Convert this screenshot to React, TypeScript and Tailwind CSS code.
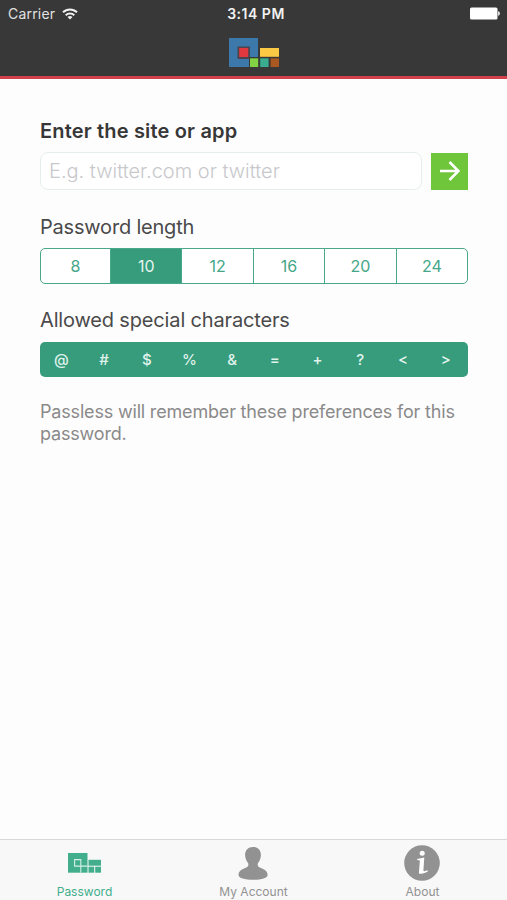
import { useState } from 'react'

const lengths = ['8', '10', '12', '16', '20', '24']
const specials = ['@', '#', '$', '%', '&', '=', '+', '?', '<', '>']

function StatusBar() {
  return (
    <div className="flex h-[27px] items-center justify-between pl-2 pr-[7px] text-[14px] text-[#e2e2e2]">
      <div className="flex w-40 items-center gap-[7px]">
        <span className="tracking-[0.2px]">Carrier</span>
        <svg width="16" height="12" viewBox="0 0 16 12" fill="none" stroke="#f0f0f0" strokeWidth="2">
          <path d="M1 4.3a10 10 0 0 1 14 0" />
          <path d="M3.7 7.2a6.2 6.2 0 0 1 8.6 0" />
          <path d="M8 11.6 5.5 9.1a3.6 3.6 0 0 1 5 0Z" fill="#f0f0f0" stroke="none" />
        </svg>
      </div>
      <span className="relative left-0.5 text-[14px] font-semibold tracking-[0.5px] text-[#f2f2f2]">3:14 PM</span>
      <div className="flex w-40 justify-end">
        <svg width="30" height="13" viewBox="0 0 30 13" fill="#fff">
          <rect x="0" y="0.5" width="27.5" height="12" rx="1.5" />
          <path d="M28.2 4.3c2.2.5 2.2 3.9 0 4.4Z" />
        </svg>
      </div>
    </div>
  )
}

function Logo() {
  return (
    <svg width="50" height="30" viewBox="0 0 50 30">
      <path d="M0 0h29v19.5H20v9.5H0Z" fill="#3d78aa" />
      <rect x="8.5" y="8.5" width="12.5" height="12.5" fill="#4a4550" />
      <rect x="10.2" y="10" width="9" height="9" fill="#e0383e" />
      <path d="M20 19h30v1.3H20Z" fill="#383838" />
      <rect x="31" y="10" width="19" height="8.8" fill="#fbc943" />
      <rect x="21" y="20.3" width="8.2" height="8.7" fill="#82d243" />
      <rect x="31.2" y="20.3" width="8.4" height="8.7" fill="#3aad90" />
      <rect x="41.6" y="20.3" width="8.4" height="8.7" fill="#a85820" />
    </svg>
  )
}

function PasswordIcon() {
  return (
    <svg width="33" height="20" viewBox="0 0 33 20" fill="#42ae8c">
      <path d="M0 0h19.5v19.7H0Z" />
      <path d="M6.6 13.1V6.6h6.2v6.5Z" fill="none" stroke="#d5efe6" strokeWidth="1.1" />
      <rect x="20.5" y="6.8" width="12.5" height="5.9" />
      <rect x="20.5" y="13.7" width="5.7" height="6" />
      <rect x="27.2" y="13.7" width="5.8" height="6" />
      <path d="M12.8 13.1h6.7M12.8 13v6.7" stroke="#d5efe6" strokeWidth="1.1" />
    </svg>
  )
}

function AccountIcon() {
  return (
    <svg width="31" height="33" viewBox="0 0 31 33" fill="#929292">
      <path d="M15 0c4.9 0 7.9 3.2 7.9 8 0 3.2-1.3 6.200-3 8.300-.6 2 .1 3.500 1.900 4.200 5 1.800 7.800 4 7.800 7.500 0 3.200-6.500 4.800-14.600 4.800S.5 31.200.5 28c0-3.500 2.800-5.700 7.800-7.500 1.800-.7 2.500-2.200 1.900-4.200-1.700-2.100-3.100-5.100-3.100-8.300 0-4.800 3-8 7.900-8Z" />
    </svg>
  )
}

function AboutIcon() {
  return (
    <svg width="37" height="36" viewBox="0 0 37 36">
      <circle cx="18" cy="18" r="17.8" fill="#929292" />
      <circle cx="18.2" cy="8.3" r="2.5" fill="#fff" />
      <path d="M13.2 13.9 20.3 12.6 19.4 25.3c0 1.2 1.7 1 4.2 0v1.4c-2.5 1.2-5 2.1-8.3 2.1l-.4-1 1-12.200-2.700-.5Z" fill="#fff" />
    </svg>
  )
}

const tabs = [
  { label: 'Password', icon: <PasswordIcon />, active: true },
  { label: 'My Account', icon: <AccountIcon />, active: false },
  { label: 'About', icon: <AboutIcon />, active: false },
]

export default function App() {
  const [length, setLength] = useState('10')

  return (
    <div className="flex h-[900px] w-[507px] flex-col bg-[#fefdfe] font-[Inter,sans-serif]">
      <header className="h-[79px] border-b-[3px] border-[#d2404a] bg-[#383838]">
        <StatusBar />
        <div className="flex justify-center pt-[11px]">
          <Logo />
        </div>
      </header>

      <main className="flex-1 pl-10 pr-[39px] pt-10">
        <h1 className="text-[20px] font-semibold leading-6 tracking-[0.17px] text-[#373737]">
          Enter the site or app
        </h1>
        <div className="mt-[9px] flex items-center gap-[9px]">
          <input
            className="h-[38px] w-[382px] rounded-[8px] border border-[#e6eeea] bg-white px-2 text-[20px] font-light text-[#373737] outline-none placeholder:text-[#c8c8cc]"
            placeholder="E.g. twitter.com or twitter"
          />
          <button className="flex h-[37px] w-[37px] items-center justify-center bg-[#70c63b]">
            <svg width="20" height="20" viewBox="0 0 20 20" fill="none" stroke="#fff" strokeWidth="2.6">
              <path d="M0 10h18.5M9.5 1l9 9-9 9" />
            </svg>
          </button>
        </div>

        <h2 className="mt-[25px] text-[20px] leading-6 tracking-[-0.2px] text-[#4a4a4a]">Password length</h2>
        <div className="mt-[9px] flex h-[36px] overflow-hidden rounded-[5px] border-[1.5px] border-[#4aa88a] bg-white">
          {lengths.map((n) => (
            <button
              key={n}
              onClick={() => setLength(n)}
              className={`flex-1 border-l border-[#4aa88a] text-[16px] first:w-[69px] first:flex-none first:border-l-0 ${
                n === length ? 'bg-[#369c7c] text-[#e4f4ee]' : 'text-[#45a688]'
              }`}
            >
              {n}
            </button>
          ))}
        </div>

        <h2 className="mt-6 text-[20px] leading-6 tracking-[-0.16px] text-[#4a4a4a]">
          Allowed special characters
        </h2>
        <div className="mt-[10px] flex h-[35px] items-center rounded-[5px] bg-[#369c7c] pr-px pt-0.5">
          {specials.map((c) => (
            <span key={c} className="flex-1 text-center text-[15px] font-medium text-[#e0f3ec]">{c}</span>
          ))}
        </div>

        <p className="mt-6 text-[18px] leading-[22px] tracking-[-0.18px] text-[#8a8a8a]">
          Passless will remember these preferences for this password.
        </p>
      </main>

      <nav className="flex h-[61px] border-t border-[#d8d8dc] bg-[#f8f8f9]">
        {tabs.map(({ label, icon, active }) => (
          <div key={label} className="flex flex-1 flex-col items-center pt-px">
            <div className="flex h-[44px] items-center">{icon}</div>
            <span className={`text-[12px] leading-[14px] ${active ? 'text-[#42ae8c]' : 'text-[#929292]'}`}>
              {label}
            </span>
          </div>
        ))}
      </nav>
    </div>
  )
}
